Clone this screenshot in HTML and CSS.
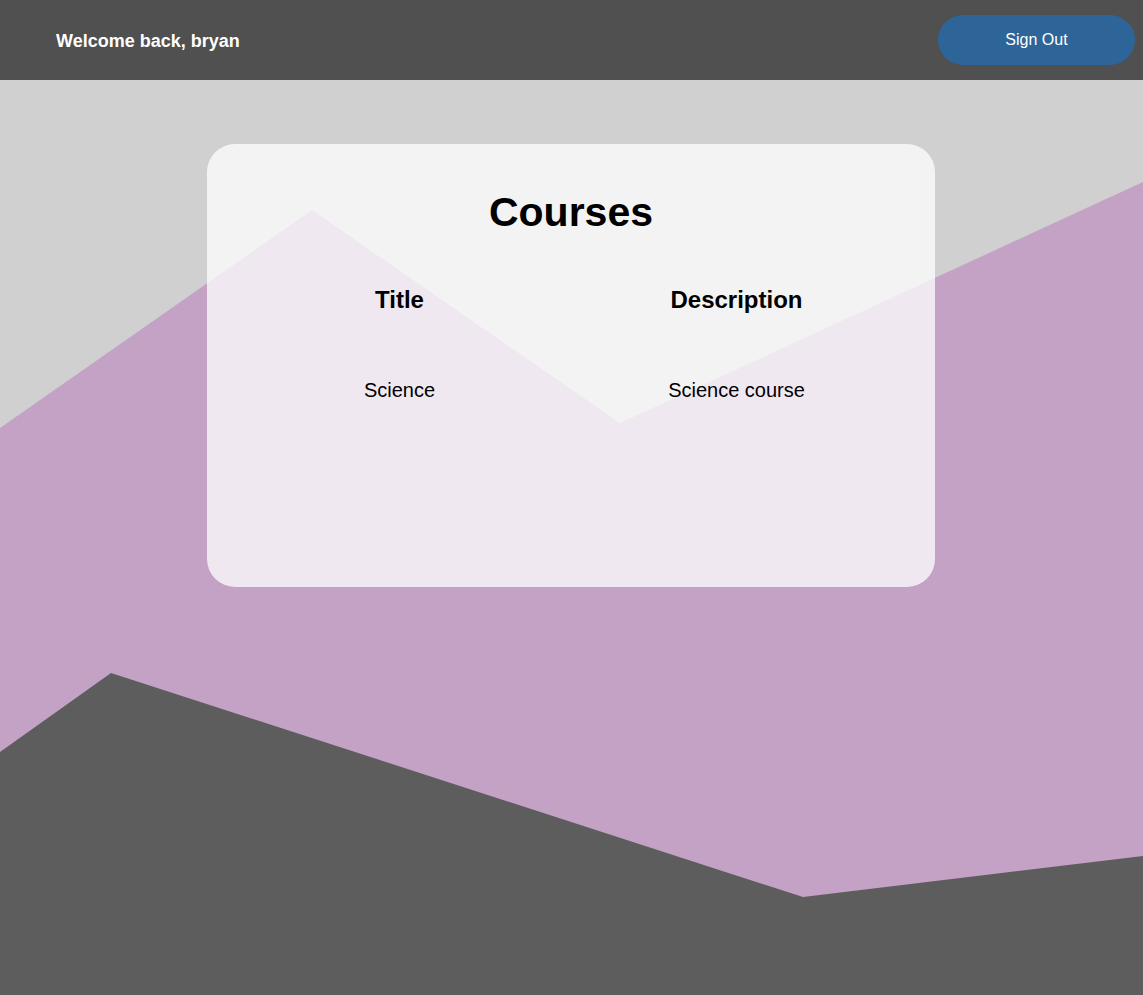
FILE: index.html
```html
<!DOCTYPE html>
<html lang="en">
<head>
<meta charset="utf-8">
<title>Courses</title>
<link rel="stylesheet" href="styles.css">
</head>
<body>
<header class="topbar">
  <span class="welcome">Welcome back, bryan</span>
  <button class="signout">Sign Out</button>
</header>
<main class="stage">
  <svg class="backdrop" viewBox="0 0 1143 915" preserveAspectRatio="none" aria-hidden="true">
    <rect x="0" y="0" width="1143" height="915" fill="#d0d0d0"/>
    <polygon points="0,348 312,130 620,343 1143,102 1143,915 0,915" fill="#c4a2c6"/>
    <polygon points="0,672 111,593 803,817 1143,776 1143,915 0,915" fill="#5d5d5d"/>
  </svg>
  <section class="card">
    <h1 class="card-title">Courses</h1>
    <table class="courses">
      <thead>
        <tr><th>Title</th><th>Description</th></tr>
      </thead>
      <tbody>
        <tr><td>Science</td><td>Science course</td></tr>
      </tbody>
    </table>
  </section>
</main>
</body>
</html>
```
FILE: styles.css
```css
* { box-sizing: border-box; }
html, body { margin: 0; padding: 0; }
body {
  font-family: "Liberation Sans", Arial, Helvetica, sans-serif;
  width: 1143px;
  height: 995px;
  overflow: hidden;
  background: #5d5d5d;
}
.topbar {
  height: 80px;
  background: #505050;
  display: flex;
  align-items: center;
  justify-content: space-between;
  padding: 0 8px 0 56px;
}
.welcome {
  color: #ffffff;
  font-weight: bold;
  font-size: 18px;
  position: relative;
  top: 1px;
}
.signout {
  width: 197px;
  height: 50px;
  border: none;
  border-radius: 25px;
  background: #2e6599;
  color: #ffffff;
  font-family: "Liberation Sans", Arial, sans-serif;
  font-size: 16px;
}
.stage {
  position: relative;
  height: 915px;
  padding-top: 64px;
}
.backdrop {
  position: absolute;
  left: 0;
  top: 0;
  width: 100%;
  height: 100%;
  display: block;
}
.card {
  position: relative;
  width: 728px;
  height: 443px;
  margin: 0 auto 0 207px;
  background: rgba(255, 255, 255, 0.75);
  border-radius: 28px;
  padding-top: 44px;
}
.card-title {
  margin: 0;
  text-align: center;
  font-size: 41px;
  line-height: 48px;
  font-weight: bold;
  color: #000;
}
.courses {
  width: 674px;
  margin: 50px auto 0;
  border-collapse: collapse;
  table-layout: fixed;
  position: relative;
  left: -3px;
}
.courses th {
  font-size: 24px;
  line-height: 28px;
  font-weight: bold;
  padding: 0;
  text-align: center;
}
.courses td {
  font-size: 20px;
  line-height: 24px;
  padding: 64px 0 0;
  text-align: center;
}
```
